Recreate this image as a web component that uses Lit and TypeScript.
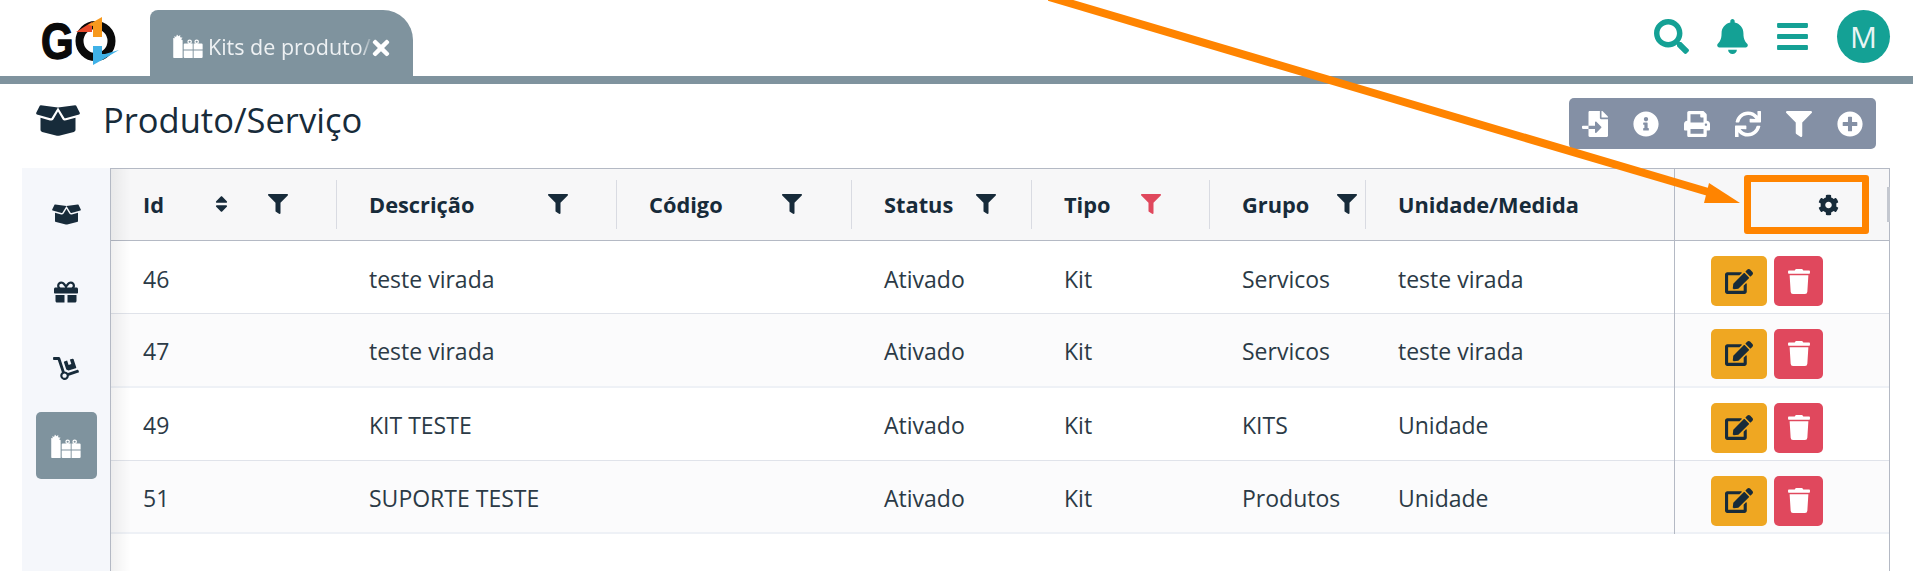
import { LitElement, html, css, svg } from "lit";
import { customElement } from "lit/decorators.js";

const P = {
  filter: ["0 0 512 512", "M487.976 0H24.028C2.71 0-8.047 25.866 7.058 40.971L192 225.941V432c0 7.831 3.821 15.17 10.237 19.662l80 55.98C298.02 518.69 320 507.493 320 487.98V225.941l184.947-184.97C520.021 25.896 509.338 0 487.976 0z"],
  search: ["0 0 512 512", "M505 442.7L405.3 343c-4.5-4.5-10.6-7-17-7H372c27.6-35.3 44-79.7 44-128C416 93.1 322.9 0 208 0S0 93.1 0 208s93.1 208 208 208c48.3 0 92.7-16.4 128-44v16.3c0 6.4 2.5 12.5 7 17l99.7 99.7c9.4 9.4 24.6 9.4 33.9 0l28.3-28.3c9.4-9.4 9.4-24.6.1-34zM208 336c-70.7 0-128-57.2-128-128 0-70.7 57.2-128 128-128 70.7 0 128 57.2 128 128 0 70.7-57.2 128-128 128z"],
  bell: ["0 0 448 512", "M224 512c35.32 0 63.97-28.65 63.97-64H160.03c0 35.35 28.65 64 63.97 64zm215.39-149.71c-19.32-20.76-55.47-51.99-55.47-154.29 0-77.7-54.48-139.9-127.94-155.16V32c0-17.67-14.32-32-31.98-32s-31.98 14.33-31.98 32v20.84C118.56 68.1 64.08 130.3 64.08 208c0 102.3-36.15 133.53-55.47 154.29-6 6.45-8.66 14.16-8.61 21.71.11 16.4 12.98 32 32.1 32h383.8c19.12 0 32-15.6 32.1-32 .05-7.55-2.61-15.27-8.61-21.71z"],
  bars: ["0 60 448 392", "M16 132h416c8.837 0 16-7.163 16-16V76c0-8.837-7.163-16-16-16H16C7.163 60 0 67.163 0 76v40c0 8.837 7.163 16 16 16zm0 160h416c8.837 0 16-7.163 16-16v-40c0-8.837-7.163-16-16-16H16c-8.837 0-16 7.163-16 16v40c0 8.837 7.163 16 16 16zm0 160h416c8.837 0 16-7.163 16-16v-40c0-8.837-7.163-16-16-16H16c-8.837 0-16 7.163-16 16v40c0 8.837 7.163 16 16 16z"],
  times: ["0 0 352 512", "M242.72 256l100.07-100.07c12.28-12.28 12.28-32.19 0-44.48l-22.24-22.24c-12.28-12.28-32.19-12.28-44.48 0L176 189.28 75.93 89.21c-12.28-12.28-32.19-12.28-44.48 0L9.21 111.45c-12.28 12.28-12.28 32.19 0 44.48L109.28 256 9.21 356.07c-12.28 12.28-12.28 32.19 0 44.48l22.24 22.24c12.28 12.28 32.2 12.28 44.48 0L176 322.72l100.07 100.07c12.28 12.28 32.2 12.28 44.48 0l22.24-22.24c12.28-12.28 12.28-32.19 0-44.48L242.72 256z"],
  info: ["0 0 512 512", "M256 8C119.043 8 8 119.083 8 256c0 136.997 111.043 248 248 248s248-111.003 248-248C504 119.083 392.957 8 256 8zm0 110c23.196 0 42 18.804 42 42s-18.804 42-42 42-42-18.804-42-42 18.804-42 42-42zm56 254c0 6.627-5.373 12-12 12h-88c-6.627 0-12-5.373-12-12v-24c0-6.627 5.373-12 12-12h12v-64h-12c-6.627 0-12-5.373-12-12v-24c0-6.627 5.373-12 12-12h64c6.627 0 12 5.373 12 12v100h12c6.627 0 12 5.373 12 12v24z"],
  print: ["0 0 512 512", "M448 192V77.25c0-8.49-3.37-16.62-9.37-22.63L393.37 9.37c-6-6-14.14-9.37-22.63-9.37H96C78.33 0 64 14.33 64 32v160c-35.35 0-64 28.65-64 64v112c0 8.84 7.16 16 16 16h48v96c0 17.67 14.33 32 32 32h320c17.67 0 32-14.33 32-32v-96h48c8.84 0 16-7.16 16-16V256c0-35.35-28.65-64-64-64zm-64 256H128v-96h256v96zm0-224H128V64h192v48c0 8.84 7.16 16 16 16h48v96zm48 72c-13.25 0-24-10.75-24-24 0-13.26 10.75-24 24-24s24 10.74 24 24c0 13.25-10.75 24-24 24z"],
  sync: ["0 0 512 512", "M440.65 12.57l4 82.77A247.16 247.16 0 0 0 255.83 8C134.73 8 33.91 94.92 12.29 209.82A12 12 0 0 0 24.09 224h49.05a12 12 0 0 0 11.67-9.26 175.91 175.91 0 0 1 317-56.94l-101.46-4.86a12 12 0 0 0-12.57 12v47.41a12 12 0 0 0 12 12H500a12 12 0 0 0 12-12V12a12 12 0 0 0-12-12h-47.37a12 12 0 0 0-11.98 12.57zM255.83 432a175.61 175.61 0 0 1-146-77.8l101.8 4.87a12 12 0 0 0 12.57-12v-47.4a12 12 0 0 0-12-12H12a12 12 0 0 0-12 12V500a12 12 0 0 0 12 12h47.35a12 12 0 0 0 12-12.6l-4.15-82.57A247.17 247.17 0 0 0 255.83 504c121.11 0 221.93-86.92 243.55-201.82a12 12 0 0 0-11.8-14.18h-49.05a12 12 0 0 0-11.67 9.26A175.86 175.86 0 0 1 255.83 432z"],
  plus: ["0 0 512 512", "M256 8C119 8 8 119 8 256s111 248 248 248 248-111 248-248S393 8 256 8zm144 276c0 6.6-5.4 12-12 12h-92v92c0 6.6-5.4 12-12 12h-56c-6.6 0-12-5.4-12-12v-92h-92c-6.6 0-12-5.4-12-12v-56c0-6.6 5.4-12 12-12h92v-92c0-6.6 5.4-12 12-12h56c6.6 0 12 5.4 12 12v92h92c6.6 0 12 5.4 12 12v56z"],
  fileImport: ["0 0 512 512", "M16 288c-8.8 0-16 7.2-16 16v32c0 8.8 7.2 16 16 16h112v-64zm489-183L407.1 7c-4.5-4.5-10.6-7-17-7H384v128h128v-6.1c0-6.3-2.5-12.4-7-16.9zm-153 31V0H152c-13.3 0-24 10.7-24 24v264h128v-65.2c0-14.3 17.3-21.4 27.4-11.3L379 308c6.6 6.7 6.6 17.4 0 24l-95.7 96.4c-10.1 10.1-27.4 3-27.4-11.3V352H128v136c0 13.3 10.7 24 24 24h336c13.3 0 24-10.7 24-24V160H376c-13.2 0-24-10.8-24-24z"],
  boxOpen: ["0 0 640 512", "M425.7 256c-16.9 0-32.8-9-41.4-23.4L320 126l-64.2 106.6c-8.7 14.5-24.6 23.5-41.5 23.5-4.5 0-9-.6-13.3-1.9L64 215v178c0 14.7 10 27.5 24.2 31l216.2 54.1c10.2 2.5 20.9 2.5 31 0L551.8 424c14.2-3.6 24.2-16.4 24.2-31V215l-137 39.1c-4.3 1.3-8.8 1.9-13.3 1.9zm212.6-112.2L586.8 41c-3.1-6.2-9.8-9.8-16.7-8.9L320 64l91.7 152.1c3.8 6.3 11.4 9.3 18.5 7.3l197.9-56.5c9.9-2.9 14.7-13.9 10.2-23.1zM53.2 41L1.7 143.8c-4.6 9.2.3 20.2 10.1 23l197.9 56.5c7.1 2 14.7-1 18.5-7.3L320 64 69.8 32.1c-6.9-.8-13.5 2.7-16.6 8.9z"],
  gift: ["0 0 512 512", "M32 448c0 17.7 14.3 32 32 32h160V320H32v128zm256 32h160c17.7 0 32-14.3 32-32V320H288v160zm192-320h-42.1c6.2-12.1 10.1-25.5 10.1-40 0-48.5-39.5-88-88-88-41.6 0-68.5 21.3-103 68.3-34.5-47-61.4-68.3-103-68.3-48.5 0-88 39.5-88 88 0 14.5 3.8 27.9 10.1 40H32c-17.7 0-32 14.3-32 32v80c0 8.8 7.2 16 16 16h480c8.8 0 16-7.2 16-16v-80c0-17.7-14.3-32-32-32zm-326.1 0c-22.1 0-40-17.9-40-40s17.9-40 40-40c19.9 0 34.6 3.3 86.1 80h-86.1zm206.1 0h-86.1c51.4-76.5 65.7-80 86.1-80 22.1 0 40 17.9 40 40s-17.9 40-40 40z"],
  dolly: ["0 0 576 512", "M294.2 277.7c18 5 34.7 13.4 49.5 24.7l161.5-53.8c8.4-2.8 12.9-11.9 10.1-20.2L454.9 47.2c-2.8-8.4-11.9-12.9-20.2-10.1l-61.1 20.4 33.1 99.4L346 177l-33.1-99.4-61.6 20.5c-8.4 2.8-12.9 11.9-10.1 20.2l53 159.4zm281 48.7L565 296c-2.8-8.4-11.9-12.9-20.2-10.1l-213.5 71.2c-17.2-22-43.6-36.4-73.5-37L158.4 21.9C154 8.8 141.8 0 128 0H16C7.2 0 0 7.2 0 16v32c0 8.8 7.2 16 16 16h88.9l92.2 276.7c-26.1 20.4-41.7 53.6-36 90.5 6.1 39.4 37.9 72.3 77.3 79.2 60.2 10.7 112.3-34.8 113.4-92.6l213.3-71.2c8.3-2.8 12.9-11.8 10.1-20.2zM256 464c-26.5 0-48-21.5-48-48s21.5-48 48-48 48 21.5 48 48-21.5 48-48 48z"],
  edit: ["0 0 576 512", "M402.6 83.2l90.2 90.2c3.8 3.8 3.8 10 0 13.8L274.4 405.6l-92.8 10.3c-12.4 1.4-22.9-9.1-21.5-21.5l10.3-92.8L388.8 83.2c3.8-3.8 10-3.8 13.8 0zm162-22.9l-48.8-48.8c-15.2-15.2-39.9-15.2-55.2 0l-35.4 35.4c-3.8 3.8-3.8 10 0 13.8l90.2 90.2c3.8 3.8 10 3.8 13.8 0l35.4-35.4c15.2-15.3 15.2-40 0-55.2zM384 346.2V448H64V128h229.8c3.2 0 6.2-1.3 8.5-3.5l40-40c7.6-7.6 2.2-20.5-8.5-20.5H48C21.5 64 0 85.5 0 112v352c0 26.5 21.5 48 48 48h352c26.5 0 48-21.5 48-48V306.2c0-10.7-12.9-16-20.5-8.5l-40 40c-2.2 2.3-3.5 5.3-3.5 8.5z"],
  trash: ["0 0 448 512", "M432 32H312l-9.4-18.7A24 24 0 0 0 281.1 0H166.8a23.72 23.72 0 0 0-21.4 13.3L136 32H16A16 16 0 0 0 0 48v32a16 16 0 0 0 16 16h416a16 16 0 0 0 16-16V48a16 16 0 0 0-16-16zM53.2 467a48 48 0 0 0 47.9 45h245.8a48 48 0 0 0 47.9-45L416 128H32z"],
  cog: ["0 0 512 512", "M487.4 315.7l-42.6-24.6c4.3-23.2 4.3-47 0-70.2l42.6-24.6c4.9-2.8 7.1-8.6 5.5-14-11.1-35.6-30-67.8-54.7-94.6-3.8-4.1-10-5.1-14.8-2.3L380.8 110c-17.9-15.4-38.5-27.3-60.8-35.1V25.8c0-5.6-3.9-10.5-9.4-11.7-36.7-8.2-74.3-7.8-109.2 0-5.5 1.2-9.4 6.1-9.4 11.7V75c-22.2 7.9-42.8 19.8-60.8 35.1L88.7 85.5c-4.9-2.8-11-1.9-14.8 2.3-24.7 26.7-43.6 58.9-54.7 94.6-1.7 5.4.6 11.2 5.5 14L67.3 221c-4.3 23.2-4.3 47 0 70.2l-42.6 24.6c-4.9 2.8-7.1 8.6-5.5 14 11.1 35.6 30 67.8 54.7 94.6 3.8 4.1 10 5.1 14.8 2.3l42.6-24.6c17.9 15.4 38.5 27.3 60.8 35.1v49.2c0 5.6 3.9 10.5 9.4 11.7 36.7 8.2 74.3 7.8 109.2 0 5.5-1.2 9.4-6.1 9.4-11.7v-49.2c22.2-7.9 42.8-19.8 60.8-35.1l42.6 24.6c4.9 2.8 11 1.9 14.8-2.3 24.7-26.7 43.6-58.9 54.7-94.6 1.5-5.5-.7-11.3-5.6-14.1zM256 336c-44.1 0-80-35.9-80-80s35.9-80 80-80 80 35.9 80 80-35.9 80-80 80z"],
  sort: ["0 0 320 512", "M41 288h238c21.4 0 32.1 25.9 17 41L177 448c-9.4 9.4-24.6 9.4-33.9 0L24 329c-15.1-15.1-4.4-41 17-41zm255-105L177 64c-9.4-9.4-24.6-9.4-33.9 0L24 183c-15.1 15.1-4.4 41 17 41h238c21.4 0 32.1-25.9 17-41z"],
} as const;

function icon(name: keyof typeof P, w: number, h: number) {
  const [vb, d] = P[name];
  return html`<svg class="ic" width=${w} height=${h} viewBox=${vb} fill="currentColor"><path d=${d}></path></svg>`;
}

// spiky tall box + ribbon box, same silhouette as the gifts glyph
function gifts(w: number, h: number) {
  return html`<svg class="ic" width=${w} height=${h} viewBox="0 0 640 512" fill="currentColor">
    ${svg`<path d="M20 512Q5 512 5 495V85L35 92 30 40 65 65 85 8 115 50 155 20 152 70 205 78 172 112 205 135V512z"></path>
    <circle cx="355" cy="165" r="36" fill="none" stroke="currentColor" stroke-width="26"></circle>
    <circle cx="505" cy="165" r="36" fill="none" stroke="currentColor" stroke-width="26"></circle>
    <path d="M250 200H420V330H228V222Q228 200 250 200zM440 200H610Q632 200 632 222V330H440z"></path>
    <path d="M228 350H420V512H250Q228 512 228 490zM440 350H632V490Q632 512 610 512H440z"></path>`}
  </svg>`;
}

const columns = [
  { label: "Id", sort: true, filter: "f-id" },
  { label: "Descrição", filter: "f-desc" },
  { label: "Código", filter: "f-cod" },
  { label: "Status", filter: "f-status" },
  { label: "Tipo", filter: "f-tipo", active: true },
  { label: "Grupo", filter: "f-grupo" },
  { label: "Unidade/Medida", last: true },
];

const rows = [
  ["46", "teste virada", "", "Ativado", "Kit", "Servicos", "teste virada"],
  ["47", "teste virada", "", "Ativado", "Kit", "Servicos", "teste virada"],
  ["49", "KIT TESTE", "", "Ativado", "Kit", "KITS", "Unidade"],
  ["51", "SUPORTE TESTE", "", "Ativado", "Kit", "Produtos", "Unidade"],
];

@customElement("app-root")
export class AppRoot extends LitElement {
  static styles = css`
    :host {
      display: block;
      position: relative;
      width: 1913px;
      height: 571px;
      overflow: hidden;
      background: #fff;
      color: #172b3a;
      font-family: "Open Sans", "Noto Sans", sans-serif;
    }
    .ic {
      display: block;
      flex: none;
    }
    .topbar {
      display: flex;
      align-items: flex-end;
      height: 76px;
      border-bottom: 8px solid #7f939e;
    }
    .logo {
      flex: none;
      margin: 0 0 6px 40px;
      width: 80px;
      height: 70px;
    }
    .tab {
      display: flex;
      align-items: center;
      width: 263px;
      height: 66px;
      margin-left: 30px;
      padding: 6px 0 0 23px;
      box-sizing: border-box;
      background: #7f939e;
      border-radius: 8px 30px 0 0;
      color: #fff;
    }
    .tab-label {
      width: 164px;
      margin-left: 5px;
      white-space: nowrap;
      font-size: 21.5px;
      color: #eef1f3;
      -webkit-mask-image: linear-gradient(90deg, #000 93%, rgba(0, 0, 0, 0.15));
      mask-image: linear-gradient(90deg, #000 93%, rgba(0, 0, 0, 0.15));
    }
    .tab .close {
      margin-top: 3px;
    }
    .top-actions {
      display: flex;
      align-items: center;
      margin-left: auto;
      height: 76px;
      padding-right: 23px;
      color: #14a195;
    }
    .top-actions .s {
      margin-right: 28px;
      margin-top: -3px;
    }
    .top-actions .b {
      margin-right: 29px;
      margin-top: -3px;
    }
    .top-actions .m {
      margin-right: 29px;
      margin-top: -3px;
    }
    .avatar {
      display: flex;
      align-items: center;
      justify-content: center;
      width: 53px;
      height: 53px;
      border-radius: 50%;
      background: #14a195;
      color: #eaf5f4;
      font-size: 30px;
      margin-top: -3px;
    }
    .pagehead {
      display: flex;
      align-items: center;
      height: 84px;
      padding: 0 37px 0 36px;
    }
    .pagehead h1 {
      margin: 0 0 0 23px;
      font-size: 34.5px;
      font-weight: 400;
      line-height: 40px;
      color: #172b3a;
      position: relative;
      top: -6px;
    }
    .pagehead .boxic {
      position: relative;
      top: -6px;
    }
    .tools {
      display: flex;
      align-items: center;
      gap: 25px;
      margin-left: auto;
      height: 51px;
      padding: 0 13px;
      margin-top: -5px;
      border-radius: 5px;
      background: #8490a5;
      color: #fff;
    }
    .main {
      display: flex;
      height: 403px;
      padding-left: 22px;
    }
    .side {
      flex: none;
      width: 88px;
      background: #f5f7fb;
      display: flex;
      flex-direction: column;
      align-items: center;
      padding-top: 8px;
      box-sizing: border-box;
    }
    .side-item {
      display: flex;
      align-items: center;
      justify-content: center;
      width: 61px;
      height: 77px;
      border-radius: 5px;
      color: #172b3a;
    }
    .side-item.on {
      height: 67px;
      margin-top: 5px;
      background: #7f939e;
      color: #fff;
    }
    .table {
      position: relative;
      flex: none;
      width: 1780px;
      height: 403px;
      box-sizing: border-box;
      border-left: 1px solid #b4b9c4;
      border-top: 1px solid #b4b9c4;
    }
    .grid {
      display: grid;
      grid-template-columns: 226px 280px 235px 180px 178px 156px 308px 215px;
      grid-template-rows: 1fr;
    }
    .head {
      height: 72px;
      box-sizing: border-box;
      background: #f7f7f8;
      border-bottom: 1px solid #b4b9c4;
    }
    .th {
      position: relative;
      display: flex;
      align-items: center;
      padding-left: 32px;
      font-size: 21.8px;
      font-weight: 700;
      color: #172b3a;
      white-space: nowrap;
    }
    .th::after {
      content: "";
      position: absolute;
      right: 0;
      top: 11px;
      bottom: 11px;
      width: 1px;
      background: #d9dbe2;
    }
    .th.plain::after {
      display: none;
    }
    .th .f {
      position: absolute;
      top: 25px;
      color: #172b3a;
    }
    .th .f.active {
      color: #e0485d;
    }
    .f-id {
      left: 157px;
    }
    .f-desc {
      left: 211px;
    }
    .f-cod {
      left: 165px;
    }
    .f-status {
      left: 124px;
    }
    .f-tipo {
      left: 109px;
    }
    .f-grupo {
      left: 127px;
    }
    .th .sort {
      position: absolute;
      left: 104px;
      top: 25px;
    }
    .gear {
      justify-content: flex-end;
      padding: 0 50px 0 0;
    }
    .row {
      height: 73.3px;
      border-bottom: 1px solid #e0e3ea;
      box-sizing: border-box;
      background: #fff;
    }
    .row.odd {
      background: #fbfbfc;
      border-bottom: 2px solid #eef1f6;
    }
    .td {
      display: flex;
      align-items: center;
      padding: 3px 0 0 32px;
      font-size: 23px;
      color: #2b3a46;
      white-space: nowrap;
    }
    .actions {
      grid-column: 8;
      gap: 7px;
      padding: 8px 0 0 37px;
    }
    .btn {
      display: flex;
      align-items: center;
      justify-content: center;
      height: 50px;
      border-radius: 5px;
    }
    .btn.edit {
      width: 56px;
      background: #efa722;
      color: #172b3a;
    }
    .btn.del {
      width: 49px;
      background: #e0485d;
      color: #fff;
    }
    .shade {
      position: absolute;
      left: 0;
      top: 0;
      bottom: 0;
      width: 20px;
      background: linear-gradient(90deg, rgba(0, 0, 0, 0.06), transparent);
      pointer-events: none;
    }
    .rule {
      position: absolute;
      top: 0;
      width: 1px;
      height: 365px;
      background: #b4b9c4;
    }
    .rule.full {
      height: 100%;
    }
    .thumb {
      position: absolute;
      left: 1887px;
      top: 187px;
      width: 3px;
      height: 35px;
      background: #c4c8d0;
    }
    .mark {
      position: absolute;
      left: 1744px;
      top: 175px;
      width: 125px;
      height: 59px;
      box-sizing: border-box;
      border: 7px solid #ff8400;
      border-radius: 3px;
    }
    .arrow {
      position: absolute;
      left: 0;
      top: 0;
      pointer-events: none;
    }
  `;

  render() {
    return html`
      <div class="topbar">
        <svg class="logo" viewBox="0 -16 80 70">
          ${svg`<text transform="translate(1 43) scale(.84 1)" font-family="Liberation Sans, sans-serif" font-weight="700" font-size="50" stroke="#0a0a0a" stroke-width="1.4" fill="#0a0a0a">G</text>
          <circle cx="55.5" cy="25" r="16" fill="none" stroke="#0a0a0a" stroke-width="8"></circle>
          <path d="M36 16L52 6V16z" fill="#e8492a"></path>
          <path d="M48 9L62 1V21H53V10z" fill="#f7991d"></path>
          <path d="M53 30H62V44L53 49z" fill="#3fb1e7"></path>
          <path d="M62 44L79 34L65 38H62z" fill="#3fb1e7"></path>`}
        </svg>
        <div class="tab">
          ${gifts(30, 24)}
          <span class="tab-label">Kits de produto/</span>
          <span class="close">${icon("times", 18, 24)}</span>
        </div>
        <div class="top-actions">
          <span class="s">${icon("search", 35, 35)}</span>
          <span class="b">${icon("bell", 31, 35)}</span>
          <span class="m">${icon("bars", 31, 27)}</span>
          <div class="avatar">M</div>
        </div>
      </div>

      <div class="pagehead">
        <span class="boxic">${icon("boxOpen", 44, 35)}</span>
        <h1>Produto/Serviço</h1>
        <div class="tools">
          ${icon("fileImport", 26, 26)} ${icon("info", 26, 26)}
          ${icon("print", 26, 26)} ${icon("sync", 26, 26)}
          ${icon("filter", 26, 26)} ${icon("plus", 26, 26)}
        </div>
      </div>

      <div class="main">
        <nav class="side">
          <div class="side-item">${icon("boxOpen", 29, 23)}</div>
          <div class="side-item">${icon("gift", 24, 24)}</div>
          <div class="side-item">${icon("dolly", 26, 23)}</div>
          <div class="side-item on">${gifts(30, 24)}</div>
        </nav>
        <div class="table">
          <div class="grid head">
            ${columns.map(
              (c) => html`
                <div class="th ${c.last ? "plain" : ""}">
                  ${c.label}
                  ${c.sort ? html`<span class="sort">${icon("sort", 13, 20)}</span>` : ""}
                  ${c.filter
                    ? html`<span class="f ${c.filter} ${c.active ? "active" : ""}">${icon("filter", 20, 20)}</span>`
                    : ""}
                </div>
              `,
            )}
            <div class="th plain gear">${icon("cog", 21, 22)}</div>
          </div>
          ${rows.map(
            (r, i) => html`
              <div class="grid row ${i % 2 ? "odd" : ""}">
                ${r.map((v) => html`<div class="td">${v}</div>`)}
                <div class="td actions">
                  <div class="btn edit">${icon("edit", 28, 25)}</div>
                  <div class="btn del">${icon("trash", 22, 25)}</div>
                </div>
              </div>
            `,
          )}
          <div class="shade"></div>
          <div class="rule" style="left:1563px"></div>
          <div class="rule full" style="left:1778px"></div>
        </div>
      </div>

      <div class="thumb"></div>
      <div class="mark"></div>
      <svg class="arrow" width="1913" height="571">
        ${svg`<line x1="1049" y1="-3" x2="1715" y2="194" stroke="#ff8400" stroke-width="8"></line>
        <path d="M1740 203L1709 183L1704 203z" fill="#ff8400"></path>`}
      </svg>
    `;
  }
}
